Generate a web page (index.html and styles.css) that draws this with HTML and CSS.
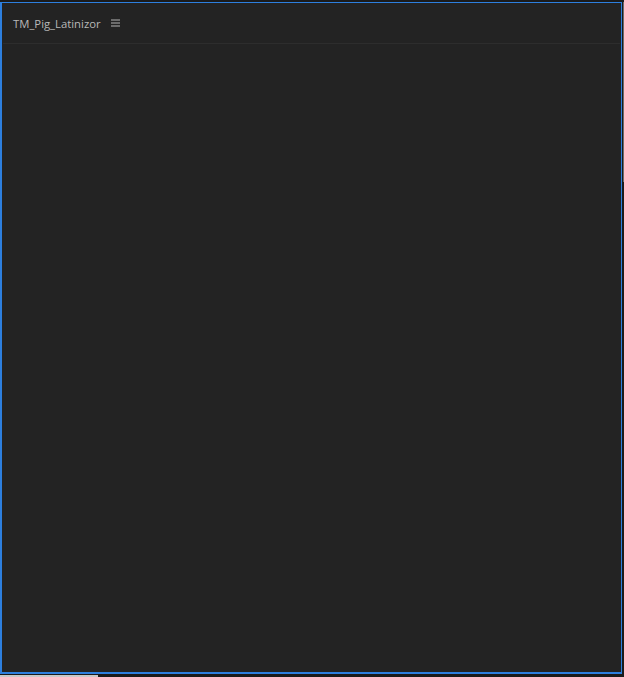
FILE: index.html
```html
<!DOCTYPE html>
<html>
<head>
<meta charset="utf-8">
<link rel="stylesheet" href="styles.css">
</head>
<body>
<div class="page">
  <div class="panel">
    <div class="header">
      <span class="title">TM_Pig_Latinizor</span>
      <span class="menu">
        <svg width="9" height="8" viewBox="0 0 9 8"><rect x="0" y="0.5" width="9" height="1" fill="#b4b4b4"/><rect x="0" y="3.5" width="9" height="1" fill="#b4b4b4"/><rect x="0" y="6.5" width="9" height="1" fill="#b4b4b4"/></svg>
      </span>
    </div>
    <div class="body"></div>
  </div>
  <div class="side">
    <div class="side-light"></div>
  </div>
</div>
<div class="bottom">
  <div class="bottom-light"></div>
</div>
</body>
</html>
```

FILE: styles.css
```css
html, body {
  margin: 0;
  padding: 0;
  background: #1b1b1b;
  width: 624px;
  height: 677px;
  overflow: hidden;
}
.page {
  display: flex;
  padding-top: 2px;
  height: 672px;
}
.panel {
  width: 619px;
  height: 669px;
  border: 1px solid #2d7fde;
  border-left-width: 2px;
  border-bottom-width: 2px;
  background: #232323;
  display: flex;
  flex-direction: column;
}
.header {
  height: 40px;
  display: flex;
  align-items: center;
  padding-left: 10px;
  border-bottom: 1px solid #2d2d2d;
  margin: 0 1px;
  font-family: "Open Sans", "Liberation Sans", sans-serif;
  font-size: 11.3px;
  color: #b8b8b8;
}
.menu {
  margin-left: 10px;
  display: flex;
  align-items: center;
}
.body { flex: 1; }
.side {
  width: 2px;
  display: flex;
  flex-direction: column;
}
.side-light {
  margin-left: 1px;
  width: 1px;
  height: 180px;
  background: #6a6a6a;
}
.bottom {
  height: 3px;
  padding-top: 1px;
}
.bottom-light {
  width: 98px;
  height: 2px;
  background: #c8c8c8;
}
```
